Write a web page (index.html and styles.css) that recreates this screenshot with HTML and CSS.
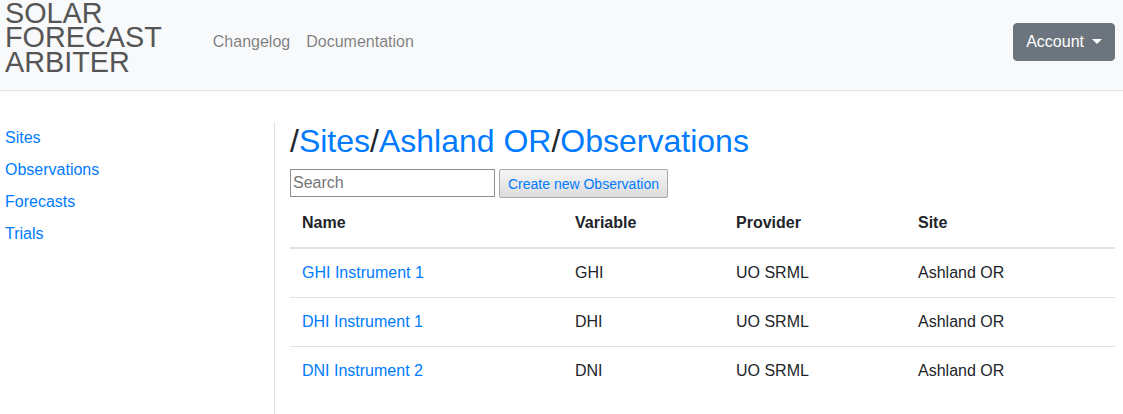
FILE: index.html
```html
<!DOCTYPE html>
<html lang="en">
<head>
<meta charset="utf-8">
<title>Solar Forecast Arbiter</title>
<link rel="stylesheet" href="styles.css">
</head>
<body>
<header class="navbar">
  <a class="brand" href="#">SOLAR<br>FORECAST<br>ARBITER</a>
  <nav class="nav">
    <a class="nav-link" href="#">Changelog</a>
    <a class="nav-link" href="#">Documentation</a>
  </nav>
  <button class="account-btn" type="button">Account<span class="caret"></span></button>
</header>
<div class="layout">
  <aside class="sidebar">
    <a class="side-link" href="#">Sites</a>
    <a class="side-link" href="#">Observations</a>
    <a class="side-link" href="#">Forecasts</a>
    <a class="side-link" href="#">Trials</a>
  </aside>
  <main class="main">
    <h2 class="crumbs">/<a href="#">Sites</a>/<a href="#">Ashland OR</a>/<a href="#">Observations</a></h2>
    <div class="tools">
      <input class="search" type="text" placeholder="Search">
      <button class="create-btn" type="button">Create new Observation</button>
    </div>
    <table class="table">
      <thead>
        <tr>
          <th class="c-name">Name</th>
          <th class="c-var">Variable</th>
          <th class="c-prov">Provider</th>
          <th class="c-site">Site</th>
        </tr>
      </thead>
      <tbody>
        <tr>
          <td><a href="#">GHI Instrument 1</a></td>
          <td>GHI</td>
          <td>UO SRML</td>
          <td>Ashland OR</td>
        </tr>
        <tr>
          <td><a href="#">DHI Instrument 1</a></td>
          <td>DHI</td>
          <td>UO SRML</td>
          <td>Ashland OR</td>
        </tr>
        <tr>
          <td><a href="#">DNI Instrument 2</a></td>
          <td>DNI</td>
          <td>UO SRML</td>
          <td>Ashland OR</td>
        </tr>
      </tbody>
    </table>
  </main>
</div>
</body>
</html>
```

FILE: styles.css
```css
* { box-sizing: border-box; }
html, body {
  margin: 0;
  padding: 0;
  background: #fff;
  font-family: "Liberation Sans", Arial, sans-serif;
  font-size: 16px;
  line-height: 24px;
  color: #212529;
}
body { height: 414px; overflow: hidden; }
a { color: #007bff; text-decoration: none; }

.navbar {
  display: flex;
  align-items: center;
  height: 91px;
  padding: 0 8px 0 5px;
  background: #f8f9fa;
  border-bottom: 1px solid #e3e4e6;
  box-shadow: 0 1px 2px rgba(0,0,0,0.04);
}
.brand {
  display: block;
  color: #555;
  font-size: 28.8px;
  line-height: 24.5px;
  margin-top: -15px;
  margin-right: 43px;
}
.nav { display: flex; flex: 1; margin-top: -6px; }
.nav-link {
  color: rgba(0,0,0,0.5);
  padding: 0 8px;
}
.account-btn {
  display: flex;
  align-items: center;
  height: 38px;
  margin-top: -6px;
  padding: 0 12px;
  background: #6c757d;
  border: 1px solid #6c757d;
  border-radius: 4px;
  color: #fff;
  font-family: inherit;
  font-size: 16px;
  line-height: 24px;
}
.caret {
  display: inline-block;
  margin-left: 8px;
  width: 0;
  height: 0;
  border-top: 5px solid #fff;
  border-left: 5px solid transparent;
  border-right: 5px solid transparent;
  margin-top: -2px;
}

.layout {
  display: flex;
  padding-top: 31px;
  height: 323px;
}
.sidebar {
  width: 274px;
  padding-left: 5px;
  display: flex;
  flex-direction: column;
}
.side-link { padding: 4px 0; }
.main {
  flex: 1;
  border-left: 1px solid #dee2e6;
  padding: 0 8px 0 15px;
}
.crumbs {
  margin: 0 0 9px;
  font-size: 32px;
  font-weight: 400;
  line-height: 38.4px;
  color: #212529;
}
.tools {
  display: flex;
  align-items: flex-start;
  gap: 4px;
}
.search {
  width: 205px;
  height: 28px;
  padding: 1px 2px;
  border: 1px solid #8f8f8f;
  font-family: inherit;
  font-size: 16px;
  color: #212529;
}
.search::placeholder { color: #757575; }
.create-btn {
  height: 29px;
  padding: 0 8px;
  border: 1px solid #a9a9a9;
  border-radius: 2px;
  background: linear-gradient(#f5f5f5, #dcdcdc);
  color: #007bff;
  font-family: inherit;
  font-size: 14px;
}
.table {
  width: 100%;
  border-collapse: collapse;
  margin-top: 1px;
}
.table th, .table td {
  padding: 12px;
  text-align: left;
  vertical-align: top;
}
.table th {
  font-weight: 700;
  border-bottom: 2px solid #dee2e6;
}
.table tbody tr + tr td { border-top: 1px solid #dee2e6; }
.c-name { width: 273px; }
.c-var { width: 161px; }
.c-prov { width: 182px; }
```
